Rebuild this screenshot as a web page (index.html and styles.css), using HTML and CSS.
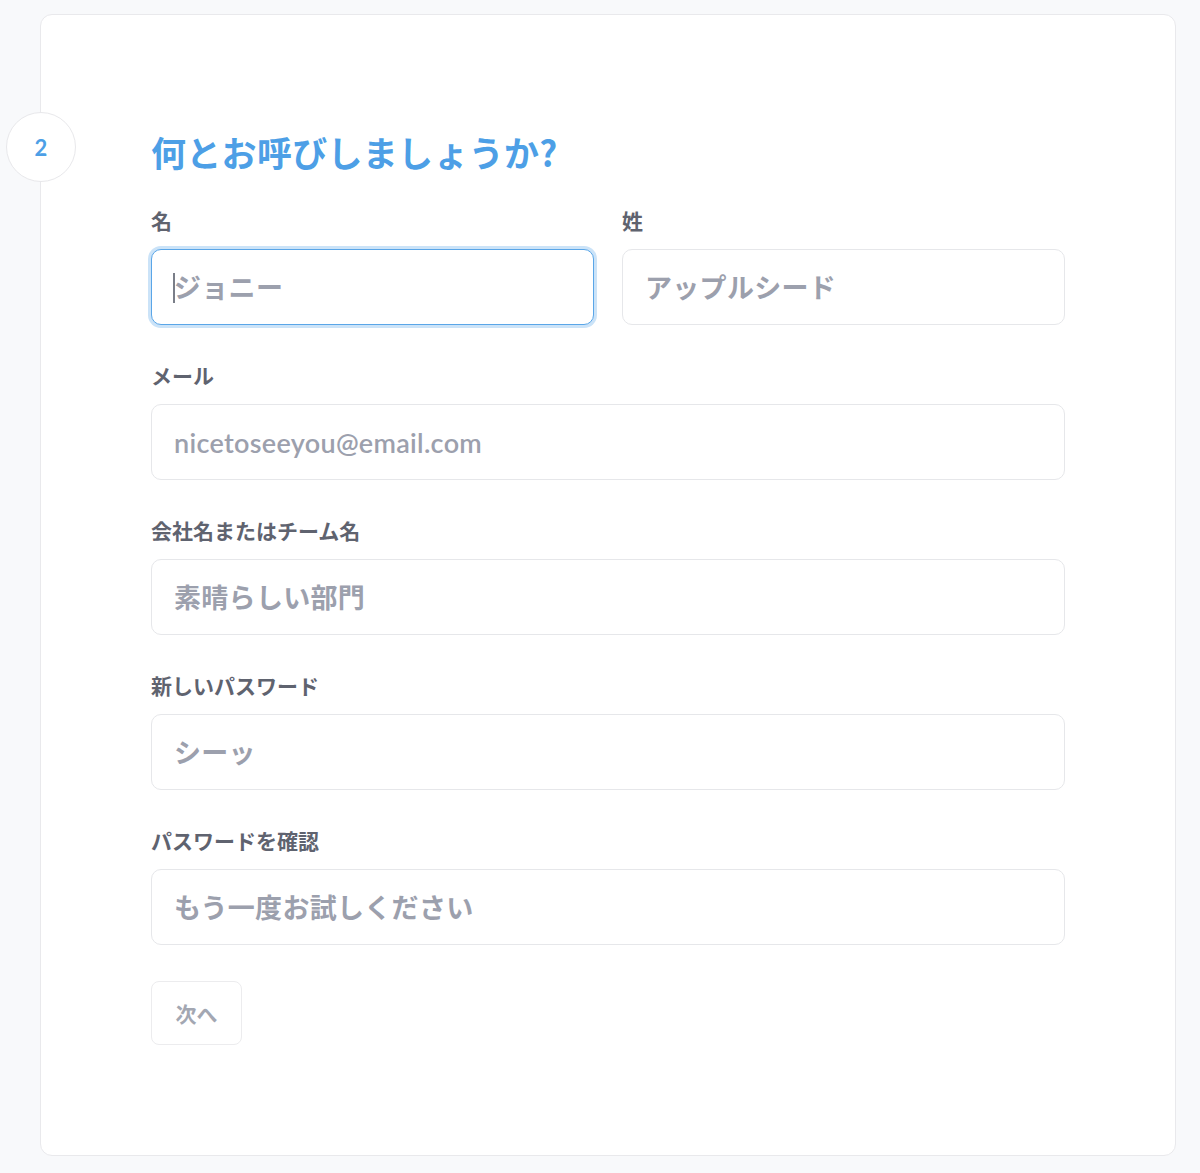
FILE: index.html
```html
<!DOCTYPE html>
<html lang="ja">
<head>
  <meta charset="utf-8">
  <link rel="stylesheet" href="styles.css">
</head>
<body>
  <div class="card">
    <div class="step">2</div>
    <h1 class="title">何とお呼びしましょうか?</h1>

    <div class="row">
      <div class="field">
        <label for="first">名</label>
        <div class="input-wrap">
          <input id="first" class="input focused" type="text" placeholder="ジョニー">
          <span class="caret"></span>
        </div>
      </div>
      <div class="field">
        <label for="last">姓</label>
        <input id="last" class="input" type="text" placeholder="アップルシード">
      </div>
    </div>

    <div class="field">
      <label for="email">メール</label>
      <input id="email" class="input" type="email" placeholder="nicetoseeyou@email.com">
    </div>

    <div class="field">
      <label for="team">会社名またはチーム名</label>
      <input id="team" class="input" type="text" placeholder="素晴らしい部門">
    </div>

    <div class="field">
      <label for="pass">新しいパスワード</label>
      <input id="pass" class="input" type="password" placeholder="シーッ">
    </div>

    <div class="field">
      <label for="confirm">パスワードを確認</label>
      <input id="confirm" class="input" type="password" placeholder="もう一度お試しください">
    </div>

    <button class="next-button" type="button">次へ</button>
  </div>
</body>
</html>
```

FILE: styles.css
```css
html, body {
  margin: 0;
  background-color: #f8f9fb;
  font-family: Lato, "Noto Sans CJK JP", sans-serif;
}

.card {
  position: relative;
  margin: 14px 24px 17px 40px;
  height: 1142px;
  box-sizing: border-box;
  background-color: white;
  border: 1px solid #e9e9ec;
  border-radius: 12px;
  padding: 116px 110px 0;
}

.step {
  position: absolute;
  left: -35px;
  top: 97px;
  width: 70px;
  height: 70px;
  box-sizing: border-box;
  border: 1px solid #e8e8eb;
  border-radius: 50%;
  background-color: white;
  display: flex;
  align-items: center;
  justify-content: center;
  color: #4d9fe6;
  font-size: 22px;
  font-weight: bold;
}

.title {
  margin: 0 0 34px;
  font-family: "Noto Sans CJK JP", Lato, sans-serif;
  font-size: 35px;
  line-height: 42px;
  font-weight: 600;
  letter-spacing: 0.3px;
  color: #4d9fe6;
}

.row {
  display: grid;
  grid-template-columns: 1fr 1fr;
  gap: 28px;
}

.field {
  display: flex;
  flex-direction: column;
  margin-bottom: 37px;
}

.field label {
  font-size: 21px;
  line-height: 28px;
  font-weight: 600;
  color: #5f636f;
  margin-bottom: 14px;
}

.input-wrap {
  position: relative;
}

.input {
  width: 100%;
  height: 76px;
  box-sizing: border-box;
  border: 1px solid #e6e7ea;
  border-radius: 10px;
  padding: 0 22px;
  font-family: Lato, "Noto Sans CJK JP", sans-serif;
  font-size: 27px;
  font-weight: 600;
  letter-spacing: 0.3px;
  color: #333;
  outline: none;
}

.input::placeholder {
  color: #9ca0ad;
}

.input.focused {
  border: 1.5px solid #5aa6e8;
  box-shadow: 0 0 0 3px #cbe3f8;
}

.caret {
  position: absolute;
  left: 22px;
  top: 24px;
  width: 2px;
  height: 30px;
  background-color: #7a7e88;
}

.next-button {
  margin-top: -1px;
  width: 91px;
  height: 64px;
  border: 1px solid #ececee;
  border-radius: 8px;
  background-color: white;
  font-family: Lato, "Noto Sans CJK JP", sans-serif;
  font-size: 21px;
  font-weight: 600;
  color: #a3a7b2;
  padding: 0;
}
```
